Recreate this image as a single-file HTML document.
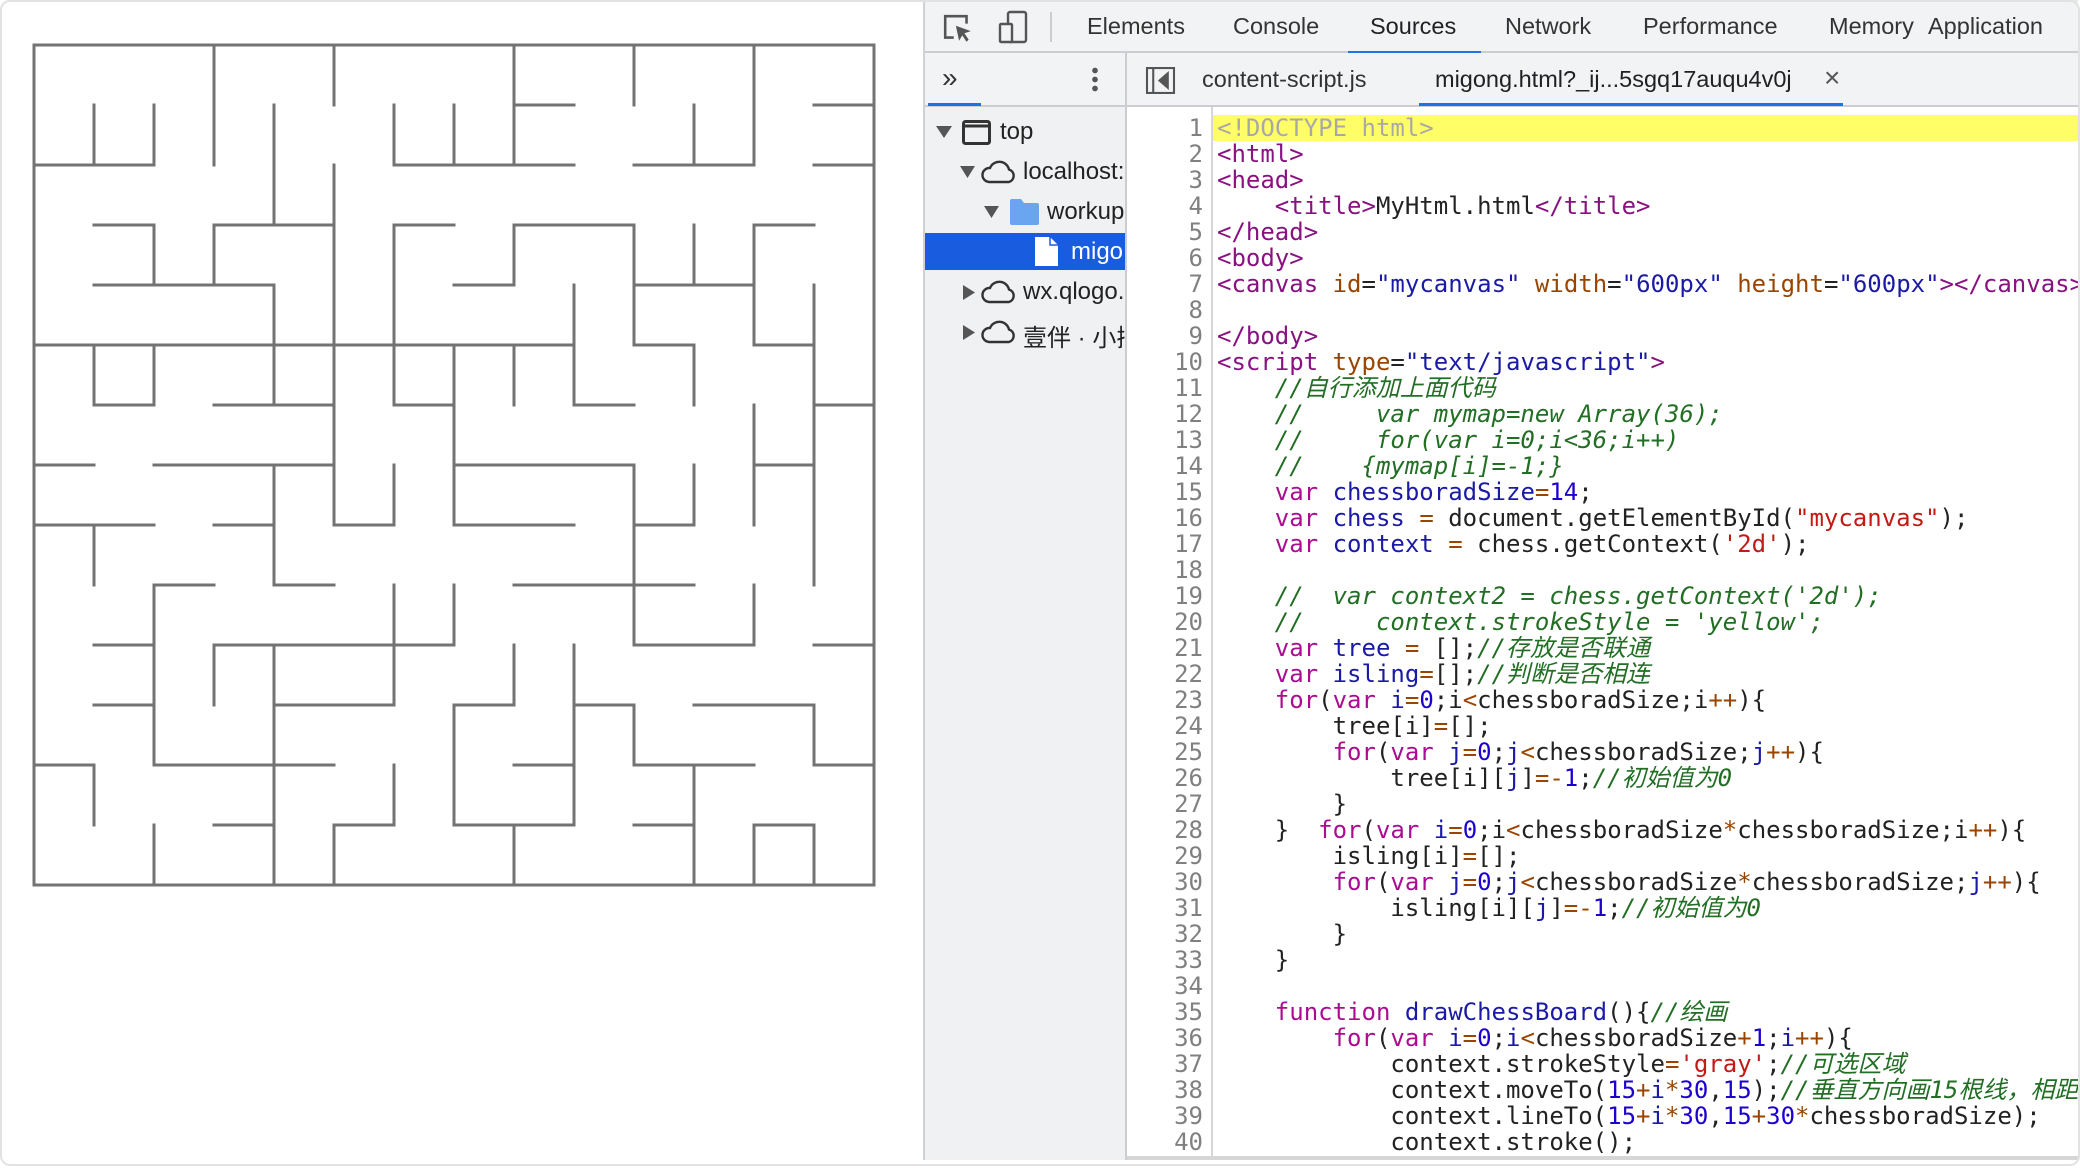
<!DOCTYPE html>
<html><head><meta charset="utf-8">
<style>
*{margin:0;padding:0;box-sizing:border-box}
html,body{width:2080px;height:1168px;overflow:hidden;background:#fff}
body{position:relative;font-family:"Liberation Sans","Noto Sans CJK SC",sans-serif}
.frame{position:absolute;left:0;top:0;width:2080px;height:1166px;border:2px solid #e2e2e2;border-radius:10px;pointer-events:none}
#maze{position:absolute;left:0;top:0}
.dt{position:absolute;left:923px;top:0;width:1155px;height:1160px;background:#fff;border-left:2px solid #cfd1d4}
.tb1{position:absolute;left:0;top:0;right:0;height:53px;background:#f1f3f4;border-bottom:2px solid #cbcdd1;border-top:2px solid #e6e6e6}
.tab{position:absolute;top:11px;font-size:23.5px;color:#333}
.tb2{position:absolute;left:0;top:53px;right:0;height:54px;background:#f1f3f4;border-bottom:2px solid #cbcdd1}
.left{position:absolute;left:0;top:107px;width:202px;bottom:0;background:#eff1f3;border-right:2px solid #cbcdd1;overflow:hidden}
.row{position:absolute;left:0;width:202px;height:38px;font-size:24px;color:#222;white-space:nowrap}
.row span{position:absolute;top:5px}
.code{position:absolute;left:202px;top:107px;right:0;bottom:0;overflow:hidden}
.mono{font-family:"DejaVu Sans Mono","Liberation Mono","Noto Sans CJK SC",monospace;font-size:24px;line-height:26px}
.lines{position:absolute;left:90px;top:8px;white-space:pre;color:#222}
.lines div{height:26px}
.t{color:#881280}.a{color:#994500}.v{color:#1a1aa6}.c{color:#236e25;font-style:italic}.k{color:#aa0d91}.n{color:#1c00cf}.o{color:#994500}.s{color:#c41a16}.g{color:#a8a8a8}
.hl{background:#fffe66}
</style></head><body>
<svg id="maze" width="900" height="900">
<g transform="translate(34,45) scale(60)" fill="none" stroke="#737373" stroke-linecap="square">
<path vector-effect="non-scaling-stroke" stroke-width="3" d="
M0 0H14V14H0Z
M1 1V2M2 1V2M0 2H2M3 0V2M4 1V3M5 0V1M5 2V8M6 1V2M6 2H9M7 1V2
M1 3H2M2 3V4M3 3H5M3 3V4M1 4H4M4 4V6M6 3H7M6 3V6M6 6H7M7 4H8M0 5H9M1 5V6M2 5V6M1 6H2M3 6H5M7 5V8M0 7H1M2 7H5M4 7V9M6 7V8
M8 0V2M8 1H9M10 0V1M10 2H12M11 1V2M12 0V2M13 1H14M13 2H14M8 3H10M8 3V4M10 3V5M10 5H11M11 5V6M11 3V4M10 4H12M12 3V5M12 3H13M12 5H13M13 4V9M9 4V6M9 6H10M8 5V6M12 6V8M13 6H14M7 7H10M11 7V8M12 7H13
M5 8H6M7 8H9M0 8H2M3 8H4M1 8V9M2 9H3M2 9V12M1 10H2M1 11H2M3 10H7M3 10V11M4 10V14M6 9V11M4 11H6M7 9V10M2 12H5M0 12H1M1 12V13M2 13V14M3 13H4M5 13V14M5 13H6M6 12V13M7 11V13M7 11H8M4 9H5
M10 7V10M10 8H11M8 9H11M10 10H12M12 9V10M13 10H14M8 10V11M7 13H9M9 10V13M9 11H10M10 11V12M10 12H12M8 12H9M11 11H13M13 11V12M13 12H14M11 12V14M10 13H11M8 13V14M12 13V14M12 13H13M13 13V14"/>
</g></svg>

<div class="dt">
 <div class="tb1">
  <svg style="position:absolute;left:17px;top:11px" width="32" height="32" viewBox="0 0 30 30" fill="none" stroke="#555" stroke-width="2.4"><path d="M11 23H3V3H23V10"/><path d="M13 12L27 17L21 19L25 25L23 27L19 21L16 26Z" fill="#555" stroke="none"/></svg>
  <svg style="position:absolute;left:73px;top:8px" width="32" height="36" viewBox="0 0 32 36" fill="none" stroke="#555" stroke-width="2.4"><rect x="10" y="2" width="18" height="30" rx="2"/><rect x="2" y="14" width="12" height="18" rx="1" fill="#f1f3f4"/></svg>
  <div style="position:absolute;left:125px;top:10px;width:2px;height:30px;background:#ccc"></div>
  <div class="tab" style="left:162px">Elements</div>
  <div class="tab" style="left:308px">Console</div>
  <div class="tab" style="left:445px;color:#202124">Sources</div>
  <div style="position:absolute;left:423px;top:49px;width:133px;height:3px;background:#1a73e8"></div>
  <div class="tab" style="left:580px">Network</div>
  <div class="tab" style="left:718px">Performance</div>
  <div class="tab" style="left:904px">Memory</div>
  <div class="tab" style="left:1003px">Application</div>
 </div>
 <div class="tb2">
  <div style="position:absolute;left:17px;top:9px;font-size:28px;color:#333">»</div>
  <div style="position:absolute;left:167px;top:13px;width:6px;height:26px;background:radial-gradient(circle,#555 2.6px,transparent 3px) 0 0/6px 9px repeat-y"></div>
  <div style="position:absolute;left:3px;top:50px;width:53px;height:3px;background:#1a73e8"></div>
  <div style="position:absolute;left:200px;top:0;width:2px;height:54px;background:#cbcdd1"></div>
  <svg style="position:absolute;left:220px;top:14px" width="31" height="27" viewBox="0 0 28 26" fill="none" stroke="#555" stroke-width="2"><rect x="1" y="1" width="26" height="24"/><path d="M7 1V25"/><path d="M21 6L13 13L21 20Z" fill="#555"/></svg>
  <div style="position:absolute;left:277px;top:13px;font-size:23.5px;color:#333">content-script.js</div>
  <div style="position:absolute;left:510px;top:13px;font-size:23.5px;color:#202124">migong.html?_ij...5sgq17auqu4v0j</div>
  <div style="position:absolute;left:899px;top:9px;font-size:28px;color:#555">×</div>
  <div style="position:absolute;left:494px;top:50px;width:424px;height:3px;background:#1a73e8"></div>
 </div>
 <div class="left">
  <div class="row" style="top:6px">
   <svg style="position:absolute;left:11px;top:13px" width="16" height="12"><path d="M0 0H16L8 12Z" fill="#555"/></svg>
   <svg style="position:absolute;left:37px;top:7px" width="29" height="25" fill="none" stroke="#333" stroke-width="3"><rect x="1.5" y="1.5" width="26" height="22" rx="2"/><path d="M1.5 6H27.5"/></svg>
   <span style="left:75px">top</span></div>
  <div class="row" style="top:46px">
   <svg style="position:absolute;left:35px;top:13px" width="15" height="12"><path d="M0 0H15L7.5 12Z" fill="#555"/></svg>
   <svg style="position:absolute;left:55px;top:7px" width="37" height="24" fill="none" stroke="#333" stroke-width="2.4"><path d="M9 22H29A6.5 6.5 0 0 0 29 9.5A10 10 0 0 0 10 8A7 7 0 0 0 9 22Z"/></svg>
   <span style="left:98px">localhost:</span></div>
  <div class="row" style="top:86px">
   <svg style="position:absolute;left:59px;top:13px" width="15" height="12"><path d="M0 0H15L7.5 12Z" fill="#555"/></svg>
   <svg style="position:absolute;left:85px;top:6px" width="29" height="26"><path d="M0 2Q0 0 2 0H11L14 4H27Q29 4 29 6V24Q29 26 27 26H2Q0 26 0 24Z" fill="#6aa5f0"/></svg>
   <span style="left:122px">workup</span></div>
  <div class="row" style="top:126px;height:37px;background:#1a5ce0;color:#fff">
   <svg style="position:absolute;left:109px;top:4px" width="25" height="30"><path d="M1 0H16L24 8V29H1Z" fill="#fff"/><path d="M16 0V8H24" fill="none" stroke="#1a5ce0" stroke-width="1.5"/></svg>
   <span style="left:146px">migo</span></div>
  <div class="row" style="top:166px">
   <svg style="position:absolute;left:38px;top:12px" width="12" height="15"><path d="M0 0V15L12 7.5Z" fill="#555"/></svg>
   <svg style="position:absolute;left:55px;top:7px" width="37" height="24" fill="none" stroke="#333" stroke-width="2.4"><path d="M9 22H29A6.5 6.5 0 0 0 29 9.5A10 10 0 0 0 10 8A7 7 0 0 0 9 22Z"/></svg>
   <span style="left:98px">wx.qlogo.</span></div>
  <div class="row" style="top:206px">
   <svg style="position:absolute;left:38px;top:12px" width="12" height="15"><path d="M0 0V15L12 7.5Z" fill="#555"/></svg>
   <svg style="position:absolute;left:55px;top:7px" width="37" height="24" fill="none" stroke="#333" stroke-width="2.4"><path d="M9 22H29A6.5 6.5 0 0 0 29 9.5A10 10 0 0 0 10 8A7 7 0 0 0 9 22Z"/></svg>
   <span style="left:98px">壹伴 · 小插</span></div>
 </div>
 <div class="code mono">
  <div class="hl" style="position:absolute;left:86px;right:0;top:8px;height:26px"></div>
  <div style="position:absolute;left:84px;top:0;bottom:0;width:2px;background:#d6d6d6"></div>
  <div style="position:absolute;left:0;top:8px;width:76px;text-align:right;color:#808080">
<div>1</div><div>2</div><div>3</div><div>4</div><div>5</div><div>6</div><div>7</div><div>8</div><div>9</div><div>10</div><div>11</div><div>12</div><div>13</div><div>14</div><div>15</div><div>16</div><div>17</div><div>18</div><div>19</div><div>20</div><div>21</div><div>22</div><div>23</div><div>24</div><div>25</div><div>26</div><div>27</div><div>28</div><div>29</div><div>30</div><div>31</div><div>32</div><div>33</div><div>34</div><div>35</div><div>36</div><div>37</div><div>38</div><div>39</div><div>40</div>
  </div>
  <div class="lines"><div class="g">&lt;!DOCTYPE html&gt;</div><div class="t">&lt;html&gt;</div><div class="t">&lt;head&gt;</div><div>    <span class="t">&lt;title&gt;</span>MyHtml.html<span class="t">&lt;/title&gt;</span></div><div class="t">&lt;/head&gt;</div><div class="t">&lt;body&gt;</div><div><span class="t">&lt;canvas</span> <span class="a">id</span>=<span class="v">"mycanvas"</span> <span class="a">width</span>=<span class="v">"600px"</span> <span class="a">height</span>=<span class="v">"600px"</span><span class="t">&gt;&lt;/canvas&gt;</span></div><div> </div><div class="t">&lt;/body&gt;</div><div><span class="t">&lt;script</span> <span class="a">type</span>=<span class="v">"text/javascript"</span><span class="t">&gt;</span></div><div>    <span class="c">//自行添加上面代码</span></div><div>    <span class="c">//     var mymap=new Array(36);</span></div><div>    <span class="c">//     for(var i=0;i&lt;36;i++)</span></div><div>    <span class="c">//    {mymap[i]=-1;}</span></div><div>    <span class="k">var</span> <span class="v">chessboradSize</span><span class="o">=</span><span class="n">14</span>;</div><div>    <span class="k">var</span> <span class="v">chess</span> <span class="o">=</span> document.getElementById(<span class="s">"mycanvas"</span>);</div><div>    <span class="k">var</span> <span class="v">context</span> <span class="o">=</span> chess.getContext(<span class="s">'2d'</span>);</div><div> </div><div>    <span class="c">//  var context2 = chess.getContext('2d');</span></div><div>    <span class="c">//     context.strokeStyle = 'yellow';</span></div><div>    <span class="k">var</span> <span class="v">tree</span> <span class="o">=</span> [];<span class="c">//存放是否联通</span></div><div>    <span class="k">var</span> <span class="v">isling</span><span class="o">=</span>[];<span class="c">//判断是否相连</span></div><div>    <span class="k">for</span>(<span class="k">var</span> <span class="v">i</span><span class="o">=</span><span class="n">0</span>;i<span class="o">&lt;</span>chessboradSize;i<span class="o">++</span>){</div><div>        tree[i]<span class="o">=</span>[];</div><div>        <span class="k">for</span>(<span class="k">var</span> <span class="v">j</span><span class="o">=</span><span class="n">0</span>;<span class="v">j</span><span class="o">&lt;</span>chessboradSize;<span class="v">j</span><span class="o">++</span>){</div><div>            tree[i][<span class="v">j</span>]<span class="o">=-</span><span class="n">1</span>;<span class="c">//初始值为0</span></div><div>        }</div><div>    }  <span class="k">for</span>(<span class="k">var</span> <span class="v">i</span><span class="o">=</span><span class="n">0</span>;i<span class="o">&lt;</span>chessboradSize<span class="o">*</span>chessboradSize;i<span class="o">++</span>){</div><div>        isling[i]<span class="o">=</span>[];</div><div>        <span class="k">for</span>(<span class="k">var</span> <span class="v">j</span><span class="o">=</span><span class="n">0</span>;<span class="v">j</span><span class="o">&lt;</span>chessboradSize<span class="o">*</span>chessboradSize;<span class="v">j</span><span class="o">++</span>){</div><div>            isling[i][<span class="v">j</span>]<span class="o">=-</span><span class="n">1</span>;<span class="c">//初始值为0</span></div><div>        }</div><div>    }</div><div> </div><div>    <span class="k">function</span> <span class="v">drawChessBoard</span>(){<span class="c">//绘画</span></div><div>        <span class="k">for</span>(<span class="k">var</span> <span class="v">i</span><span class="o">=</span><span class="n">0</span>;<span class="v">i</span><span class="o">&lt;</span>chessboradSize<span class="o">+</span><span class="n">1</span>;<span class="v">i</span><span class="o">++</span>){</div><div>            context.strokeStyle<span class="o">=</span><span class="s">'gray'</span>;<span class="c">//可选区域</span></div><div>            context.moveTo(<span class="n">15</span><span class="o">+</span><span class="v">i</span><span class="o">*</span><span class="n">30</span>,<span class="n">15</span>);<span class="c">//垂直方向画15根线，相距30px</span></div><div>            context.lineTo(<span class="n">15</span><span class="o">+</span><span class="v">i</span><span class="o">*</span><span class="n">30</span>,<span class="n">15</span><span class="o">+</span><span class="n">30</span><span class="o">*</span>chessboradSize);</div><div>            context.stroke();</div></div>
  <div style="position:absolute;left:0;right:0;top:1049px;height:4px;background:#d6d6d6"></div>
 </div>
</div>
<div class="frame"></div>
</body></html>
